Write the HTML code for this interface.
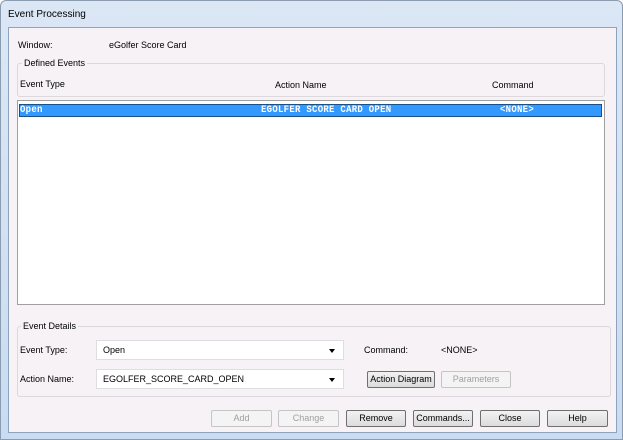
<!DOCTYPE html>
<html><head><style>
*{margin:0;padding:0;box-sizing:border-box}
body{width:623px;height:440px;overflow:hidden;background:#fff;font-family:"Liberation Sans",sans-serif;font-size:9px;color:#000;position:relative}
.a{position:absolute}
.frame{left:0;top:0;width:623px;height:440px;background:linear-gradient(#dbe7f5,#c9dcf1);border:1px solid #8c9cb0;border-radius:6px 6px 0 0}
.inner{left:8px;top:27px;width:609px;height:406px;background:#f6f2f6;border:1px solid #8ea3bd}
.grp{border:1px solid #dcd8de;border-radius:3px}
.lbl{background:#f6f2f6;padding:0 2px}
.btn{border:1px solid #707070;border-radius:2px;background:linear-gradient(#f2f2f2,#dcdcdc);text-align:center;line-height:15px}
.dis{border-color:#c5c5c5;background:#f4f4f4;color:#a0a0a0}
.combo{background:#fff;border:1px solid #e0dde2;padding-left:6px;line-height:18px}
.arr{right:8px;top:8px;width:0;height:0;border-left:3px solid transparent;border-right:3px solid transparent;border-top:4px solid #000}
.row{font-family:"Liberation Mono",monospace;font-weight:bold;color:#fff;font-size:10px;line-height:11px;letter-spacing:0.3px;transform:scaleX(0.9);transform-origin:left}
</style></head><body>
<div class="a frame"></div>
<div class="a" style="left:8px;top:9px;font-size:10px">Event Processing</div>
<div class="a inner"></div>
<div class="a" style="left:18px;top:40px">Window:</div>
<div class="a" style="left:109px;top:40px">eGolfer Score Card</div>
<div class="a grp" style="left:17px;top:63px;width:588px;height:34px"></div>
<div class="a lbl" style="left:22px;top:58px">Defined Events</div>
<div class="a" style="left:20px;top:79px">Event Type</div>
<div class="a" style="left:275px;top:80px">Action Name</div>
<div class="a" style="left:492px;top:80px">Command</div>
<div class="a" style="left:17px;top:100px;width:588px;height:205px;background:#fff;border:1px solid #a0a0a0"></div>
<div class="a" style="left:19px;top:104px;width:583px;height:13px;background:#3399ff;border:1px solid #1a4f8a"></div>
<div class="a row" style="left:20px;top:105px">Open</div>
<div class="a row" style="left:261px;top:105px">EGOLFER SCORE CARD OPEN</div>
<div class="a row" style="left:500px;top:105px">&lt;NONE&gt;</div>
<div class="a grp" style="left:17px;top:326px;width:594px;height:71px"></div>
<div class="a lbl" style="left:21px;top:321px">Event Details</div>
<div class="a" style="left:20px;top:345px">Event Type:</div>
<div class="a combo" style="left:96px;top:340px;width:248px;height:20px">Open<div class="a arr"></div></div>
<div class="a" style="left:364px;top:345px">Command:</div>
<div class="a" style="left:441px;top:345px">&lt;NONE&gt;</div>
<div class="a" style="left:20px;top:374px">Action Name:</div>
<div class="a combo" style="left:96px;top:369px;width:248px;height:20px">EGOLFER_SCORE_CARD_OPEN<div class="a arr"></div></div>
<div class="a btn" style="left:367px;top:371px;width:68px;height:17px">Action Diagram</div>
<div class="a btn dis" style="left:441px;top:371px;width:70px;height:17px">Parameters</div>
<div class="a btn dis" style="left:211px;top:410px;width:61px;height:17px">Add</div>
<div class="a btn dis" style="left:278px;top:410px;width:61px;height:17px">Change</div>
<div class="a btn" style="left:346px;top:410px;width:60px;height:17px">Remove</div>
<div class="a btn" style="left:413px;top:410px;width:60px;height:17px">Commands...</div>
<div class="a btn" style="left:480px;top:410px;width:60px;height:17px">Close</div>
<div class="a btn" style="left:547px;top:410px;width:61px;height:17px">Help</div>
</body></html>
